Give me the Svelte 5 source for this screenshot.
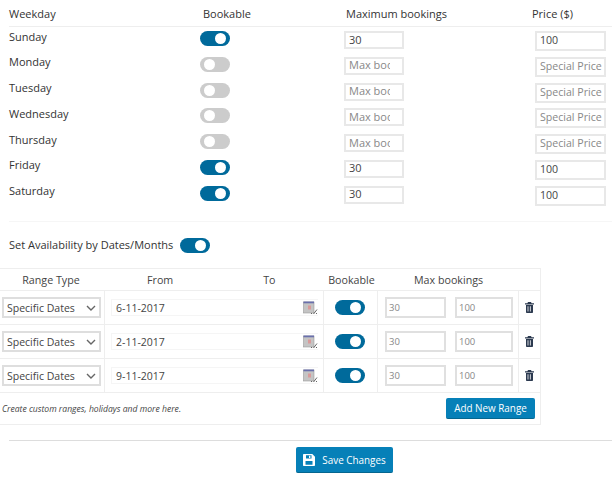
<script>
  const days = [
    { name: 'Sunday', on: true },
    { name: 'Monday', on: false },
    { name: 'Tuesday', on: false },
    { name: 'Wednesday', on: false },
    { name: 'Thursday', on: false },
    { name: 'Friday', on: true },
    { name: 'Saturday', on: true },
  ];
  const ranges = ['6-11-2017', '2-11-2017', '9-11-2017'];
</script>

<div class="page">
  <div class="week">
    <div class="week-row week-head">
      <span>Weekday</span>
      <span class="head-book">Bookable</span>
      <span class="head-max">Maximum bookings</span>
      <span class="head-price">Price ($)</span>
    </div>
    {#each days as day}
      <div class="week-row">
        <span class="day">{day.name}</span>
        <span class="toggle" class:on={day.on}><i></i></span>
        <input class="max" value={day.on ? '30' : ''} placeholder="Max bookings" />
        <input class="price" value={day.on ? '100' : ''} placeholder="Special Price" />
      </div>
    {/each}
  </div>

  <div class="soft-rule"></div>

  <div class="avail">
    <span class="avail-label">Set Availability by Dates/Months</span>
    <span class="toggle on"><i></i></span>
  </div>

  <div class="ranges">
    <div class="range-row range-head">
      <span class="c-type">Range Type</span>
      <span class="c-dates"><b>From</b><b>To</b></span>
      <span class="c-book">Bookable</span>
      <span class="c-max">Max bookings</span>
      <span></span>
    </div>
    {#each ranges as date}
      <div class="range-row">
        <div class="cell">
          <div class="select">
            Specific Dates
            <svg width="10" height="6" viewBox="0 0 10 6" fill="none" stroke="#666" stroke-width="1.4"><path d="M1 1l4 4 4-4" /></svg>
          </div>
        </div>
        <div class="cell">
          <div class="date">
            <span>{date}</span>
            <svg width="15" height="14" viewBox="0 0 15 14">
              <rect x="0.500" y="1" width="10.500" height="11" fill="#c4c4c4" stroke="#999" stroke-width="0.6" />
              <rect x="0.500" y="0.500" width="10.500" height="1.800" fill="#6a70ac" />
              <rect x="5" y="4.500" width="3" height="4" fill="#d99a9a" />
              <path d="M8 13l1-1M10.500 13l3.500-4.500M13 13l1-1" stroke="#555" stroke-width="0.9" fill="none" />
            </svg>
          </div>
        </div>
        <div class="cell center toggle-cell"><span class="toggle on"><i></i></span></div>
        <div class="cell nums">
          <input class="num n1" value="30" />
          <input class="num n2" value="100" />
        </div>
        <div class="cell center">
          <svg width="9" height="11" viewBox="0 0 9 11" fill="#2c3a50">
            <path d="M3 0h3l.6 1.200H9v1.200H0V1.200h2.400z" />
            <path d="M1 3h7v7.200c0 .5-.3.8-.8.8H1.800c-.5 0-.8-.3-.8-.8zM2.600 4.200v5.400h.8V4.200zm2.300 0v5.400h.8V4.200z" fill-rule="evenodd" />
          </svg>
        </div>
      </div>
    {/each}
    <div class="range-foot">
      <em>Create custom ranges, holidays and more here.</em>
      <button class="btn add" type="button">Add New Range</button>
    </div>
  </div>

  <div class="rule"></div>

  <div class="actions">
    <button class="btn save" type="button">
      <svg width="12" height="12" viewBox="0 0 12 12" fill="#fff">
        <path fill-rule="evenodd" d="M1 0h8.300L12 2.700V11c0 .6-.4 1-1 1H1c-.6 0-1-.4-1-1V1c0-.6.4-1 1-1zm2 1.200v3.300h5.500V1.200zM2.500 7v3.800h7V7z" />
        <rect x="6" y="1.700" width="1.400" height="2.300" />
      </svg>
      Save Changes
    </button>
  </div>
</div>

<style>
  :global(body) {
    background: #fff;
  }

  .page {
    width: 612px;
    height: 479px;
    overflow: hidden;
    font-family: 'Open Sans', sans-serif;
    font-size: 11px;
    color: #333;
  }

  .week {
    padding: 5px 0 0 9px;
  }

  .week-row {
    display: grid;
    grid-template-columns: 191px 144px 191px 71px;
    align-items: start;
    height: 25.800px;
  }

  .week-head {
    height: 21px;
    margin-bottom: 4px;
    border-bottom: 1px solid #eee;
    font-weight: 500;
  }

  .week-head span {
    line-height: 18px;
  }

  .head-book {
    padding-left: 3px;
  }

  .head-max {
    padding-left: 2px;
  }

  .head-price {
    margin-left: -3px;
  }

  .day {
    line-height: 15px;
    margin-top: -2.500px;
  }

  .toggle {
    display: inline-block;
    position: relative;
    width: 30px;
    height: 15px;
    border-radius: 8px;
    background: #ccc;
  }

  .toggle i {
    position: absolute;
    top: 2px;
    left: 4px;
    width: 11px;
    height: 11px;
    border-radius: 50%;
    background: #fff;
  }

  .toggle.on {
    background: #006a9b;
  }

  .toggle.on i {
    left: 15px;
  }

  input {
    box-sizing: border-box;
    font-family: inherit;
    background: #fff;
    outline: none;
    margin: 0;
    color: #444;
  }

  input::placeholder {
    color: #888;
    opacity: 1;
  }

  .max {
    width: 60px;
    height: 18px;
    padding: 0 12px 2px 3px;
    border: 2px solid #e8e8e8;
    font-size: 11px;
  }

  .price {
    width: 71px;
    height: 20px;
    padding: 0 0 2px 3px;
    border: 2px solid #e8e8e8;
    font-size: 10.600px;
  }

  .soft-rule {
    height: 1px;
    margin: 9.600px 0 0 9px;
    background: #f6f6f6;
  }

  .avail {
    display: flex;
    align-items: center;
    gap: 7px;
    height: 15px;
    margin: 16px 0 0 9px;
    font-weight: 500;
    white-space: nowrap;
  }

  .avail-label {
    margin-top: -2px;
  }

  .ranges {
    width: 541px;
    box-sizing: border-box;
    margin-top: 15px;
    border-top: 1px solid #eee;
    border-right: 1px solid #eee;
  }

  .range-row {
    display: grid;
    grid-template-columns: 105px 219px 54px 141px 21px;
    height: 34px;
    box-sizing: border-box;
    border-bottom: 1px solid #eee;
  }

  .range-head {
    height: 22px;
    align-items: center;
    color: #444;
    font-size: 10.700px;
  }

  .c-type {
    text-align: center;
    padding-right: 3px;
  }

  .c-dates {
    display: flex;
    padding-left: 42px;
    gap: 90px;
  }

  .c-dates b {
    font-weight: 400;
  }

  .c-book {
    text-align: center;
    padding-left: 1px;
  }

  .c-max {
    padding-left: 36px;
  }

  .cell {
    box-sizing: border-box;
    border-right: 1px solid #eee;
    display: flex;
    align-items: center;
    min-width: 0;
  }

  .cell:first-child {
    padding-left: 2px;
  }

  .cell:last-child {
    border-right: 0;
  }

  .center {
    justify-content: center;
  }

  .toggle-cell {
    padding-right: 1px;
  }

  .select {
    box-sizing: border-box;
    width: 99px;
    height: 21px;
    border: 2px solid #dedede;
    display: flex;
    align-items: center;
    justify-content: space-between;
    padding: 0 3px 0 3px;
    font-size: 10.500px;
    color: #444;
    white-space: nowrap;
  }

  .date {
    box-sizing: border-box;
    display: flex;
    align-items: center;
    justify-content: space-between;
    width: 207px;
    height: 17px;
    margin-left: 6px;
    padding-left: 4px;
    font-size: 10.500px;
    color: #444;
    border: 1px solid #f5f5f5;
    border-right: 0;
  }

  .nums {
    gap: 9px;
    padding-left: 7px;
  }

  .num {
    height: 21px;
    padding: 0 0 0 2px;
    border: 2px solid #e0e0e0;
    font-size: 9.500px;
    color: #888;
  }

  .n1 {
    width: 61px;
  }

  .n2 {
    width: 58px;
  }

  .range-foot {
    display: flex;
    align-items: center;
    justify-content: space-between;
    height: 32px;
    box-sizing: border-box;
    padding: 0 5px 0 2px;
    border-bottom: 1px solid #eee;
  }

  .range-foot em {
    font-size: 8.600px;
    color: #444;
  }

  .btn {
    box-sizing: border-box;
    display: inline-flex;
    align-items: center;
    justify-content: center;
    background: #0680b8;
    color: #fff;
    border: 0;
    border-bottom: 1px solid #05668f;
    border-radius: 2px;
    font-family: inherit;
    font-size: 9.900px;
    font-weight: 500;
    padding: 0;
    white-space: nowrap;
  }

  .add {
    width: 89px;
    height: 21px;
  }

  .rule {
    height: 1px;
    margin: 15px 0 0 9px;
    background: #ddd;
  }

  .actions {
    display: flex;
    padding: 6px 0 0 296px;
  }

  .save {
    width: 97px;
    height: 26px;
    gap: 7px;
  }
</style>
